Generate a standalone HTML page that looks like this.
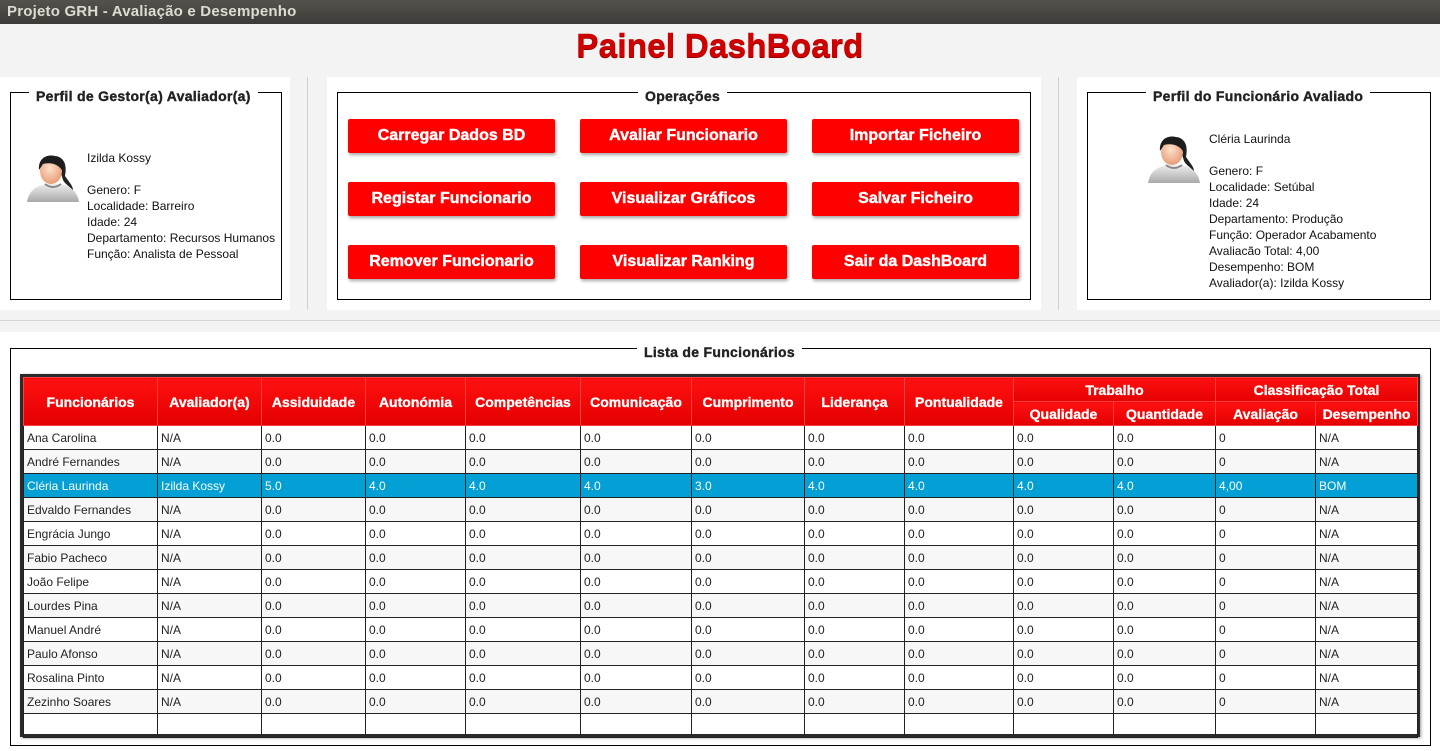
<!DOCTYPE html>
<html><head><meta charset="utf-8"><style>
*{box-sizing:border-box;margin:0;padding:0}
body{width:1440px;height:751px;background:#f3f3f3;font-family:"Liberation Sans",sans-serif;position:relative;overflow:hidden;color:#111}
.abs{position:absolute}
.tb{left:0;top:0;width:1440px;height:24px;background:linear-gradient(#54524d,#3c3b37);color:#dfdbd2;font-weight:bold;font-size:15px;line-height:24px;padding-left:7px;letter-spacing:0.2px}
.title{left:0;width:1440px;top:27px;text-align:center;font-size:33px;font-weight:bold;color:#d00000;text-shadow:0 1px 0 #800;-webkit-text-stroke:0.6px #c00000;letter-spacing:0.3px}
.panel{background:#fff;top:77px;height:233px}
.fs{border:1px solid #000}
.lg{position:absolute;top:-5px;background:#fff;font-weight:bold;font-size:14px;line-height:16px;padding:0 7px;color:#222;white-space:nowrap;-webkit-text-stroke:0.4px #222;letter-spacing:0.3px}
.btn{position:absolute;width:207px;height:34px;background:#ff0000;color:#fff;font-weight:bold;font-size:16px;text-align:center;line-height:34px;border-radius:2px;box-shadow:1px 2px 3px rgba(0,0,0,.35);-webkit-text-stroke:0.4px #fff}
.info{position:absolute;font-size:12px;line-height:16px;color:#111}
table{position:absolute;left:23px;top:377px;border-collapse:collapse;table-layout:fixed;width:1394px}
td,th{font-size:12px;height:24px;padding:0 3px;white-space:nowrap;overflow:hidden;text-align:left}
td{border:1px solid #222;color:#222}
th{background:linear-gradient(#ff1010,#e40000);color:#fff;font-weight:bold;font-size:14px;text-align:center;border:1px solid #ff4040;height:24px;padding:0 1px;-webkit-text-stroke:0.3px #fff}
tr.alt td{background:#f7f7f7}
tr.sel td{background:#03a0d5;color:#fff;border-color:#222}
</style></head><body>
<div class="abs tb">Projeto GRH - Avaliação e Desempenho</div>
<div class="abs title">Painel DashBoard</div>

<svg width="0" height="0" style="position:absolute"><defs>
<radialGradient id="sk" cx="45%" cy="40%" r="60%"><stop offset="0" stop-color="#fde1cc"/><stop offset="1" stop-color="#e89e78"/></radialGradient>
<linearGradient id="sh" x1="0" y1="0" x2="0" y2="1"><stop offset="0" stop-color="#eee"/><stop offset="1" stop-color="#a9a9a9"/></linearGradient>
<symbol id="av" viewBox="0 0 56 56"><path d="M2 52 C4 40 12 36 20 34 L36 34 C44 36 52 40 54 52 Z" fill="url(#sh)"/><path d="M20 34 Q28 40 36 34" fill="none" stroke="#888" stroke-width="2"/><path d="M31 6 C40 8 42 16 40 26 C44 32 48 36 48 40 C44 36 40 34 38 30 Z" fill="#222"/><ellipse cx="26" cy="21" rx="11" ry="13" fill="url(#sk)"/><path d="M14 20 C13 8 22 4 30 6 C38 8 40 14 38 22 C34 14 26 12 18 14 Z" fill="#1c1c1c"/></symbol>
</defs></svg>

<div class="abs panel" style="left:0;width:290px"></div>
<div class="abs" style="left:307px;top:77px;width:1px;height:233px;background:#d0d0d0"></div>
<div class="abs panel" style="left:327px;width:714px"></div>
<div class="abs" style="left:1058px;top:77px;width:1px;height:233px;background:#d0d0d0"></div>
<div class="abs panel" style="left:1077px;width:363px"></div>
<div class="abs" style="left:0;top:320px;width:1440px;height:1px;background:#d6d6d6"></div>
<div class="abs" style="left:0;top:332px;width:1440px;height:419px;background:#fff"></div>

<div class="abs fs" style="left:10px;top:92px;width:272px;height:208px">
<div class="lg" style="left:18px">Perfil de Gestor(a) Avaliador(a)</div>
<svg class="abs" style="left:14px;top:57px" width="56" height="56"><use href="#av"/></svg>
<div class="info" style="left:76px;top:57px">Izilda Kossy<br><br>Genero: F<br>Localidade: Barreiro<br>Idade: 24<br>Departamento: Recursos Humanos<br>Função: Analista de Pessoal</div>
</div>

<div class="abs fs" style="left:337px;top:92px;width:694px;height:208px">
<div class="lg" style="left:300px">Operações</div>
<div class="btn" style="left:10px;top:26px">Carregar Dados BD</div>
<div class="btn" style="left:242px;top:26px">Avaliar Funcionario</div>
<div class="btn" style="left:474px;top:26px">Importar Ficheiro</div>
<div class="btn" style="left:10px;top:89px">Registar Funcionario</div>
<div class="btn" style="left:242px;top:89px">Visualizar Gráficos</div>
<div class="btn" style="left:474px;top:89px">Salvar Ficheiro</div>
<div class="btn" style="left:10px;top:152px">Remover Funcionario</div>
<div class="btn" style="left:242px;top:152px">Visualizar Ranking</div>
<div class="btn" style="left:474px;top:152px">Sair da DashBoard</div>
</div>

<div class="abs fs" style="left:1087px;top:92px;width:344px;height:208px">
<div class="lg" style="left:58px">Perfil do Funcionário Avaliado</div>
<svg class="abs" style="left:58px;top:38px" width="56" height="56"><use href="#av"/></svg>
<div class="info" style="left:121px;top:38px">Cléria Laurinda<br><br>Genero: F<br>Localidade: Setúbal<br>Idade: 24<br>Departamento: Produção<br>Função: Operador Acabamento<br>Avaliacão Total: 4,00<br>Desempenho: BOM<br>Avaliador(a): Izilda Kossy</div>
</div>

<div class="abs fs" style="left:10px;top:348px;width:1421px;height:398px;background:#fff">
<div class="lg" style="left:626px">Lista de Funcionários</div>
</div>
<div class="abs" style="left:20px;top:374px;width:1400px;height:363px;border:3px solid #2a2a2a;background:#fff;box-shadow:1px 1px 3px rgba(0,0,0,.4)"></div>

<table>
<colgroup><col style="width:134px"><col style="width:104px"><col style="width:104px"><col style="width:100px"><col style="width:115px"><col style="width:111px"><col style="width:113px"><col style="width:100px"><col style="width:109px"><col style="width:100px"><col style="width:102px"><col style="width:100px"><col style="width:102px"></colgroup>
<tr><th rowspan="2">Funcionários</th><th rowspan="2">Avaliador(a)</th><th rowspan="2">Assiduidade</th><th rowspan="2">Autonómia</th><th rowspan="2">Competências</th><th rowspan="2">Comunicação</th><th rowspan="2">Cumprimento</th><th rowspan="2">Liderança</th><th rowspan="2">Pontualidade</th><th colspan="2">Trabalho</th><th colspan="2">Classificação Total</th></tr>
<tr><th>Qualidade</th><th>Quantidade</th><th>Avaliação</th><th>Desempenho</th></tr>
<tr><td>Ana Carolina</td><td>N/A</td><td>0.0</td><td>0.0</td><td>0.0</td><td>0.0</td><td>0.0</td><td>0.0</td><td>0.0</td><td>0.0</td><td>0.0</td><td>0</td><td>N/A</td></tr>
<tr class="alt"><td>André Fernandes</td><td>N/A</td><td>0.0</td><td>0.0</td><td>0.0</td><td>0.0</td><td>0.0</td><td>0.0</td><td>0.0</td><td>0.0</td><td>0.0</td><td>0</td><td>N/A</td></tr>
<tr class="sel"><td>Cléria Laurinda</td><td>Izilda Kossy</td><td>5.0</td><td>4.0</td><td>4.0</td><td>4.0</td><td>3.0</td><td>4.0</td><td>4.0</td><td>4.0</td><td>4.0</td><td>4,00</td><td>BOM</td></tr>
<tr class="alt"><td>Edvaldo Fernandes</td><td>N/A</td><td>0.0</td><td>0.0</td><td>0.0</td><td>0.0</td><td>0.0</td><td>0.0</td><td>0.0</td><td>0.0</td><td>0.0</td><td>0</td><td>N/A</td></tr>
<tr><td>Engrácia Jungo</td><td>N/A</td><td>0.0</td><td>0.0</td><td>0.0</td><td>0.0</td><td>0.0</td><td>0.0</td><td>0.0</td><td>0.0</td><td>0.0</td><td>0</td><td>N/A</td></tr>
<tr class="alt"><td>Fabio Pacheco</td><td>N/A</td><td>0.0</td><td>0.0</td><td>0.0</td><td>0.0</td><td>0.0</td><td>0.0</td><td>0.0</td><td>0.0</td><td>0.0</td><td>0</td><td>N/A</td></tr>
<tr><td>João Felipe</td><td>N/A</td><td>0.0</td><td>0.0</td><td>0.0</td><td>0.0</td><td>0.0</td><td>0.0</td><td>0.0</td><td>0.0</td><td>0.0</td><td>0</td><td>N/A</td></tr>
<tr class="alt"><td>Lourdes Pina</td><td>N/A</td><td>0.0</td><td>0.0</td><td>0.0</td><td>0.0</td><td>0.0</td><td>0.0</td><td>0.0</td><td>0.0</td><td>0.0</td><td>0</td><td>N/A</td></tr>
<tr><td>Manuel André</td><td>N/A</td><td>0.0</td><td>0.0</td><td>0.0</td><td>0.0</td><td>0.0</td><td>0.0</td><td>0.0</td><td>0.0</td><td>0.0</td><td>0</td><td>N/A</td></tr>
<tr class="alt"><td>Paulo Afonso</td><td>N/A</td><td>0.0</td><td>0.0</td><td>0.0</td><td>0.0</td><td>0.0</td><td>0.0</td><td>0.0</td><td>0.0</td><td>0.0</td><td>0</td><td>N/A</td></tr>
<tr><td>Rosalina Pinto</td><td>N/A</td><td>0.0</td><td>0.0</td><td>0.0</td><td>0.0</td><td>0.0</td><td>0.0</td><td>0.0</td><td>0.0</td><td>0.0</td><td>0</td><td>N/A</td></tr>
<tr class="alt"><td>Zezinho Soares</td><td>N/A</td><td>0.0</td><td>0.0</td><td>0.0</td><td>0.0</td><td>0.0</td><td>0.0</td><td>0.0</td><td>0.0</td><td>0.0</td><td>0</td><td>N/A</td></tr>
<tr><td style="height:21px"></td><td></td><td></td><td></td><td></td><td></td><td></td><td></td><td></td><td></td><td></td><td></td><td></td></tr>
</table>
</body></html>
